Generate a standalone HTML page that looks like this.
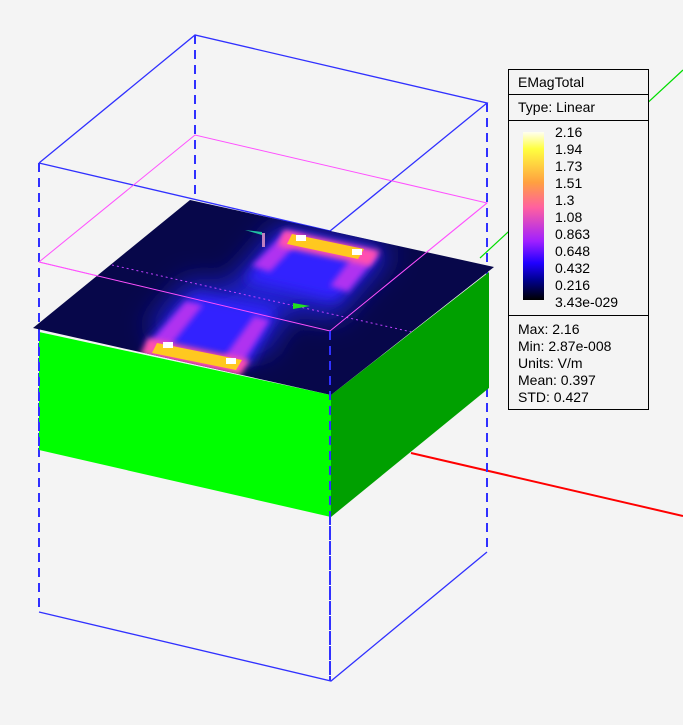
<!DOCTYPE html>
<html><head><style>
body{margin:0;background:#f4f4f4;width:683px;height:725px;overflow:hidden;font-family:"Liberation Sans",sans-serif}
svg{position:absolute;left:0;top:0}
.lg{position:absolute;left:508px;top:69px;width:139px;height:339px;border:1px solid #000;background:#f4f4f4;font-size:14px;color:#000}
.lg .r{position:absolute;left:0;width:139px;border-bottom:1px solid #000}
.lab{position:absolute;left:46px;line-height:17px}
</style></head><body>
<svg width="683" height="725">
<defs>
<filter id="b1" x="-50%" y="-50%" width="200%" height="200%"><feGaussianBlur stdDeviation="14"/></filter>
<filter id="b2" x="-50%" y="-50%" width="200%" height="200%"><feGaussianBlur stdDeviation="6"/></filter>
<filter id="b3" x="-50%" y="-50%" width="200%" height="200%"><feGaussianBlur stdDeviation="3"/></filter>
<clipPath id="pc"><polygon points="33,328 190,200 494,267 331,395"/></clipPath>
</defs>
<line x1="480" y1="258" x2="683" y2="70" stroke="#00dd00" stroke-width="1.2"/>
<line x1="411" y1="453" x2="683" y2="516" stroke="#ff0000" stroke-width="2"/>
<g stroke="#3030ff" fill="none" stroke-width="1.3">
<polyline points="39,163 195,35 487,103 330,231 39,163"/>
<polyline points="39,612 331,681 487,552"/>
<g stroke-dasharray="9,6" stroke-width="2">
<line x1="39" y1="163" x2="39" y2="612"/><line x1="195" y1="35" x2="195" y2="200"/>
<line x1="487" y1="103" x2="487" y2="552"/><line x1="330" y1="231" x2="330" y2="681"/>
</g></g>
<polyline points="39,262 195,135 487,203 330,331 39,262" fill="none" stroke="#ff50ff" stroke-width="1"/>
<polygon points="39,332 331,395 331,517 39,450" fill="#00ff00"/>
<polygon points="331,395 489,272 489,388 331,517" fill="#00a000"/>
<polygon points="33,328 190,200 494,267 331,395" fill="#07074a"/>
<g clip-path="url(#pc)">
<g filter="url(#b1)" fill="#2020d0">
<polygon points="280,225 395,250 335,320 220,295"/>
<polygon points="145,330 265,355 295,300 190,280"/>
</g>
<g filter="url(#b2)" fill="#3020ff">
<polygon points="285,232 380,252 335,300 245,280"/>
<polygon points="145,345 250,365 275,310 195,295"/>
</g>
<g filter="url(#b3)" fill="#b030f0">
<polygon points="286,232 304,236 270,272 252,266"/>
<polygon points="358,249 378,255 348,292 330,286"/>
<polygon points="148,345 168,349 203,305 186,301"/>
<polygon points="222,360 242,364 270,320 254,316"/>
</g>
<g filter="url(#b3)">
<polygon points="284,230 380,251 370,266 278,246" fill="#ff50b0"/>
<polygon points="148,338 250,360 240,376 140,355" fill="#ff50b0"/>
</g>
<polygon points="292,234 364,249 358,259 287,244" fill="#ffc820"/>
<polygon points="157,343 242,360 236,370 152,353" fill="#ffc820"/>
<g fill="#fff"><rect x="296" y="235" width="10" height="6"/><rect x="352" y="249" width="10" height="6"/><rect x="163" y="342" width="10" height="6"/><rect x="226" y="358" width="10" height="6"/></g>
</g>
<line x1="112" y1="265" x2="470" y2="345" stroke="#c040ff" stroke-width="1" stroke-dasharray="2,3" clip-path="url(#pc)"/>
<polyline points="39,262 330,331 487,203" fill="none" stroke="#ff50ff" stroke-width="1"/>
<line x1="330" y1="331" x2="330" y2="681" stroke="#3030ff" stroke-width="2" stroke-dasharray="9,6"/>
<line x1="39" y1="332" x2="39" y2="450" stroke="#3030ff" stroke-width="2" stroke-dasharray="9,6"/>
<polygon points="293,303 310,306 293,309" fill="#20e020"/>
<polygon points="245,230 262,232 262,235" fill="#20c0a0"/>
<rect x="262" y="233" width="3" height="14" fill="#c080c0"/>
</svg>
<div class="lg">
<div class="r" style="top:0;height:24px"><span style="position:absolute;left:9px;top:4px">EMagTotal</span></div>
<div class="r" style="top:25px;height:25px"><span style="position:absolute;left:9px;top:4px">Type: Linear</span></div>
<div style="position:absolute;left:14px;top:62px;width:21px;height:168px;background:linear-gradient(#fffff0,#ffff40 10%,#ffa040 30%,#ff60a0 45%,#a020ff 65%,#2000ff 78%,#000090 88%,#000)"></div>
<div class="lab" style="top:54px">2.16<br>1.94<br>1.73<br>1.51<br>1.3<br>1.08<br>0.863<br>0.648<br>0.432<br>0.216<br>3.43e-029</div>
<div style="position:absolute;left:0;top:245px;width:139px;border-top:1px solid #000"></div>
<div style="position:absolute;left:9px;top:251px;line-height:17px">Max: 2.16<br>Min: 2.87e-008<br>Units: V/m<br>Mean: 0.397<br>STD: 0.427</div>
</div>
</body></html>
